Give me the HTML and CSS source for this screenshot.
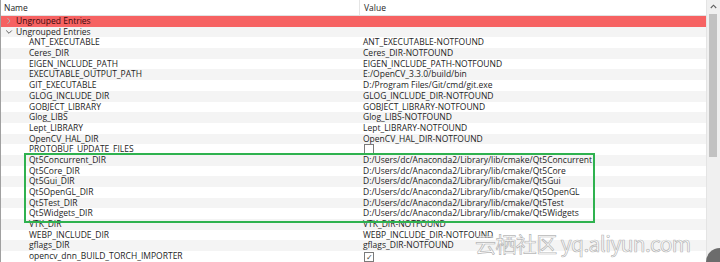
FILE: index.html
```
<!DOCTYPE html>
<html lang="en">
<head>
    <meta charset="UTF-8">
    <title>CMake Cache</title>
    <link rel="stylesheet" href="styles.css">
</head>
<body>
    <div class="panel">
        <div class="table">
            <div class="head">
                <div class="col name">Name</div>
                <div class="col value">Value</div>
            </div>
            <div class="row group selected">
                <div class="col name">
                    <svg class="arrow" width="12" height="8" viewBox="0 0 12 8"><path d="M4.5 1.2 L7 4 L4.5 6.8" fill="none" stroke="#b4b4b4" stroke-width="1"/></svg>
                    <span class="grp">Ungrouped Entries</span>
                </div>
                <div class="col value"></div>
            </div>
            <div class="row group">
                <div class="col name">
                    <svg class="arrow" width="12" height="8" viewBox="0 0 12 8"><path d="M3.2 2.5 L6 5.3 L8.8 2.5" fill="none" stroke="#606060" stroke-width="1"/></svg>
                    <span>Ungrouped Entries</span>
                </div>
                <div class="col value"></div>
            </div>
            <div class="row"><div class="col name">ANT_EXECUTABLE</div><div class="col value">ANT_EXECUTABLE-NOTFOUND</div></div>
            <div class="row"><div class="col name">Ceres_DIR</div><div class="col value">Ceres_DIR-NOTFOUND</div></div>
            <div class="row"><div class="col name">EIGEN_INCLUDE_PATH</div><div class="col value">EIGEN_INCLUDE_PATH-NOTFOUND</div></div>
            <div class="row"><div class="col name">EXECUTABLE_OUTPUT_PATH</div><div class="col value">E:/OpenCV_3.3.0/build/bin</div></div>
            <div class="row"><div class="col name">GIT_EXECUTABLE</div><div class="col value">D:/Program Files/Git/cmd/git.exe</div></div>
            <div class="row"><div class="col name">GLOG_INCLUDE_DIR</div><div class="col value">GLOG_INCLUDE_DIR-NOTFOUND</div></div>
            <div class="row"><div class="col name">GOBJECT_LIBRARY</div><div class="col value">GOBJECT_LIBRARY-NOTFOUND</div></div>
            <div class="row"><div class="col name">Glog_LIBS</div><div class="col value">Glog_LIBS-NOTFOUND</div></div>
            <div class="row"><div class="col name">Lept_LIBRARY</div><div class="col value">Lept_LIBRARY-NOTFOUND</div></div>
            <div class="row"><div class="col name">OpenCV_HAL_DIR</div><div class="col value">OpenCV_HAL_DIR-NOTFOUND</div></div>
            <div class="row"><div class="col name">PROTOBUF_UPDATE_FILES</div><div class="col value"><span class="check"></span></div></div>
            <div class="row"><div class="col name">Qt5Concurrent_DIR</div><div class="col value">D:/Users/dc/Anaconda2/Library/lib/cmake/Qt5Concurrent</div></div>
            <div class="row"><div class="col name">Qt5Core_DIR</div><div class="col value">D:/Users/dc/Anaconda2/Library/lib/cmake/Qt5Core</div></div>
            <div class="row"><div class="col name">Qt5Gui_DIR</div><div class="col value">D:/Users/dc/Anaconda2/Library/lib/cmake/Qt5Gui</div></div>
            <div class="row"><div class="col name">Qt5OpenGL_DIR</div><div class="col value">D:/Users/dc/Anaconda2/Library/lib/cmake/Qt5OpenGL</div></div>
            <div class="row"><div class="col name">Qt5Test_DIR</div><div class="col value">D:/Users/dc/Anaconda2/Library/lib/cmake/Qt5Test</div></div>
            <div class="row"><div class="col name">Qt5Widgets_DIR</div><div class="col value">D:/Users/dc/Anaconda2/Library/lib/cmake/Qt5Widgets</div></div>
            <div class="row"><div class="col name">VTK_DIR</div><div class="col value">VTK_DIR-NOTFOUND</div></div>
            <div class="row"><div class="col name">WEBP_INCLUDE_DIR</div><div class="col value">WEBP_INCLUDE_DIR-NOTFOUND</div></div>
            <div class="row"><div class="col name">gflags_DIR</div><div class="col value">gflags_DIR-NOTFOUND</div></div>
            <div class="row"><div class="col name">opencv_dnn_BUILD_TORCH_IMPORTER</div><div class="col value"><span class="check on">&#x2713;</span></div></div>
            <div class="highlight"></div>
            <div class="watermark">云栖社区 yq.aliyun.com</div>
        </div>
        <div class="scrollbar">
            <div class="up">
                <svg width="7" height="5" viewBox="0 0 7 5"><path d="M0.8 4 L3.5 1.2 L6.2 4" fill="none" stroke="#606060" stroke-width="1.1"/></svg>
            </div>
            <div class="thumb"></div>
            <div class="corner"></div>
        </div>
    </div>
</body>
</html>
```

FILE: styles.css
```
html, body {
    margin: 0;
    height: 100%;
    overflow: hidden;
    background: #fff;
}
body {
    font-family: "Open Sans", "Noto Sans", sans-serif;
    font-size: 8.5px;
    color: #1e1e1e;
}
.panel {
    display: flex;
    height: 262px;
    overflow: hidden;
    border-left: 1px solid #a0a0a0;
}
.table {
    position: relative;
    flex: 1;
    overflow: hidden;
}
.head {
    display: grid;
    grid-template-columns: 358px 1fr;
    height: 16px;
    line-height: 15px;
    border-bottom: 1px solid #e2e2e2;
    box-sizing: border-box;
}
.head .col {
    padding-left: 3px;
}
.head .value {
    border-left: 1px solid #e5e5e5;
    padding-left: 4px;
}
.row {
    display: grid;
    grid-template-columns: 359px 1fr;
    height: 10.7px;
    line-height: 10.7px;
    white-space: nowrap;
}
.row:nth-child(odd) {
    background: #f4f4f4;
}
.row .name {
    padding-left: 28px;
}
.row .value {
    padding-left: 3px;
}
.row.group .name {
    padding-left: 2px;
    display: flex;
    align-items: center;
}
.row.selected {
    background: #f66262;
}
.grp {
    color: #3a0a0a;
}
.arrow {
    flex: none;
    margin-right: 1px;
}
.check {
    display: inline-block;
    width: 8px;
    height: 8px;
    border: 1px solid #7a7a7a;
    background: #fff;
    vertical-align: -1px;
    margin-left: 1px;
    font-size: 8px;
    line-height: 8px;
    text-align: center;
    color: #444;
}
.highlight {
    position: absolute;
    left: 23px;
    top: 153px;
    width: 567px;
    height: 66px;
    border: 2px solid #2fb24f;
}
.watermark {
    position: absolute;
    left: 474px;
    top: 229px;
    font-family: "Noto Sans CJK SC", "Noto Sans", sans-serif;
    font-size: 21px;
    line-height: 28px;
    white-space: nowrap;
    color: rgba(255, 255, 255, 0.7);
    -webkit-text-stroke: 0.7px rgba(150, 150, 150, 0.7);
    letter-spacing: -0.6px;
}
.scrollbar {
    position: relative;
    width: 13px;
    background: #f0f0f0;
    border-left: 1px solid #e4e4e4;
}
.up {
    height: 12px;
    display: flex;
    align-items: center;
    justify-content: center;
}
.thumb {
    margin: 2px 3px 0 2px;
    height: 143px;
    background: #c2c2c2;
}
.corner {
    position: absolute;
    right: -14px;
    bottom: -14px;
    width: 28px;
    height: 28px;
    border-radius: 50%;
    background: #6c6c6c;
}
```
